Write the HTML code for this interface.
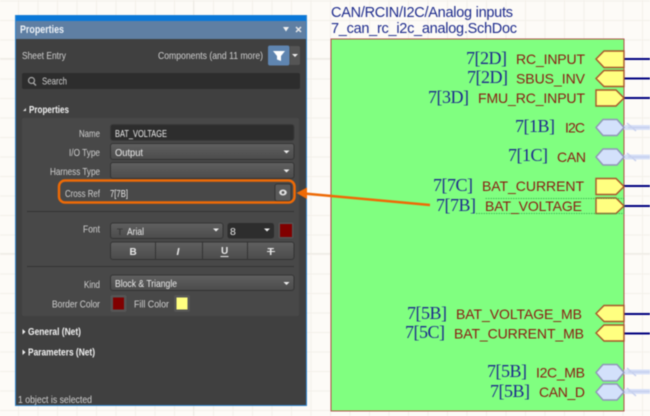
<!DOCTYPE html>
<html><head><meta charset="utf-8"><title>Properties</title>
<style>
html,body{margin:0;padding:0;width:650px;height:416px;overflow:hidden;background:#fdfbf7}
svg{display:block;filter:blur(.45px)}
text{font-family:"Liberation Sans",sans-serif}
.l{font-size:10.500px;fill:#d0d0d0}
.v{font-size:10.500px;fill:#ececec}
.b{font-size:10.500px;fill:#f2f2f2;font-weight:bold}
.p{font-size:14px;fill:#8a1a10}
.x{font-size:18px;fill:#1c2a8c;font-family:"Liberation Serif",serif}
.y{fill:#ffff80;stroke:#a8562a;stroke-width:1.400}
.h{fill:#d3e1fb;stroke:#9095b8;stroke-width:1.400}
.w{stroke:#00007f;stroke-width:2;fill:none}
.g{stroke:#d8e0f8;stroke-width:5;fill:none}
.k{stroke:#c6d0ee;stroke-width:1.500;fill:none}
</style></head><body>
<svg width="650" height="416" viewBox="0 0 650 416" xmlns="http://www.w3.org/2000/svg">
<defs>
<pattern id="grid" x="-1.500" y="0.500" width="19.500" height="19.500" patternUnits="userSpaceOnUse"><path d="M0.500 0V19.500M0 .5H19.500" stroke="#f3f0ea" stroke-width="1" fill="none"/></pattern>
<linearGradient id="c" x1="0" y1="0" x2="0" y2="1"><stop offset="0" stop-color="#606060"/><stop offset="1" stop-color="#4b4b4b"/></linearGradient>
</defs>
<rect width="650" height="416" fill="#fdfbf7"/>
<rect width="650" height="416" fill="url(#grid)"/>
<path d="M193.500 0V416M0 58.500H650M0 253.500H650" stroke="#eeebe5" fill="none"/>

<text x="331" y="17" font-size="14.500" fill="#1c2a8c" textLength="182">CAN/RCIN/I2C/Analog inputs</text>
<text x="331" y="33" font-size="14.500" fill="#1c2a8c" textLength="186">7_can_rc_i2c_analog.SchDoc</text>
<rect x="331" y="39" width="293" height="372" fill="#80ff80" stroke="#b0524a" stroke-width="1"/>

<path class="w" d="M623 59H650M623 78.500H650M623 98H650M623 186H650M623 206H650M623 314H650M623 333.500H650"/>
<path class="g" d="M624 127.500H650M624 157H650M624 372H650M624 391.500H650"/>
<path class="k" d="M627 123L636 131M627 153L636 161M627 368L636 376M627 388L636 396M628 127.500H650M628 157H650M628 372H650M628 391.500H650"/>

<path class="y" d="M624 51H604L596 59L604 67.500H624Z"/>
<path class="y" d="M624 70.500H604L596 78.500L604 86.500H624Z"/>
<path class="y" d="M596 90H616L624 98L616 106H596Z"/>
<path class="h" d="M603 119.500H617L624 127.500L617 135.500H603L596 127.500Z"/>
<path class="h" d="M603 149H617L624 157L617 165H603L596 157Z"/>
<path class="y" d="M596 178.500H616L624 186.500L616 194.500H596Z"/>
<path class="y" d="M596 198H616L624 206L616 213.500H596Z"/>
<path d="M485.500 198.500H624V213.500H476" fill="none" stroke="#2fa84a" stroke-width=".8" stroke-dasharray="1.500 1"/>
<path class="y" d="M624 305.500H604L596 313.500L604 321.500H624Z"/>
<path class="y" d="M624 325H604L596 333L604 341H624Z"/>
<path class="h" d="M603 364.500H617L624 372.500L617 381H603L596 372.500Z"/>
<path class="h" d="M603 384H617L624 392L617 400H603L596 392Z"/>

<text class="p" x="516" y="64" textLength="69">RC_INPUT</text>
<text class="p" x="516" y="83.500" textLength="69">SBUS_INV</text>
<text class="p" x="478" y="103" textLength="107">FMU_RC_INPUT</text>
<text class="p" x="565" y="132.500" textLength="20">I2C</text>
<text class="p" x="557" y="162" textLength="29">CAN</text>
<text class="p" x="482" y="191" textLength="102">BAT_CURRENT</text>
<text class="p" x="485" y="211" textLength="97">BAT_VOLTAGE</text>
<text class="p" x="456" y="319" textLength="126">BAT_VOLTAGE_MB</text>
<text class="p" x="454" y="338.500" textLength="130">BAT_CURRENT_MB</text>
<text class="p" x="536" y="377.500" textLength="49">I2C_MB</text>
<text class="p" x="539" y="397" textLength="46">CAN_D</text>

<text class="x" x="466" y="64" textLength="41">7[2D]</text>
<text class="x" x="467" y="83" textLength="41">7[2D]</text>
<text class="x" x="428" y="103" textLength="41">7[3D]</text>
<text class="x" x="515" y="132" textLength="40">7[1B]</text>
<text class="x" x="508" y="161" textLength="40">7[1C]</text>
<text class="x" x="433" y="191" textLength="40">7[7C]</text>
<text class="x" x="436" y="211" textLength="40">7[7B]</text>
<text class="x" x="407" y="319" textLength="40">7[5B]</text>
<text class="x" x="405" y="338" textLength="40">7[5C]</text>
<text class="x" x="487" y="377" textLength="40">7[5B]</text>
<text class="x" x="490" y="397" textLength="40">7[5B]</text>

<rect x="15.500" y="15.500" width="291" height="390" fill="#404040" stroke="#2f86d0"/>
<rect x="16" y="15.500" width="290" height="6" fill="#0a78d8"/>
<rect x="16" y="21" width="290" height="18" fill="#5f7fa3"/>
<text x="20" y="33" font-size="11" font-weight="bold" fill="#eef3f8" textLength="44" lengthAdjust="spacingAndGlyphs">Properties</text>
<path d="M283 27H289L286 31.500Z" fill="#f0f0f0"/>
<path d="M296 27L301 32M301 27L296 32" stroke="#e8e8e8" stroke-width="1.500"/>

<text class="l" x="22" y="59" textLength="44" lengthAdjust="spacingAndGlyphs">Sheet Entry</text>
<text class="l" x="158" y="59" textLength="105" lengthAdjust="spacingAndGlyphs">Components (and 11 more)</text>
<rect x="268" y="45.500" width="21.500" height="20" rx="2" fill="#5f85b0"/>
<path d="M273 51H285L281 56V61L277 59.500V56Z" fill="#fff"/>
<path d="M290 46H298Q300 46 300 48V63Q300 65 298 65H290Z" fill="#555"/>
<path d="M292 54H298L295 57Z" fill="#eee"/>

<rect x="22" y="73" width="278" height="16" rx="2" fill="#2d2d2d"/>
<circle cx="31.500" cy="80.500" r="3" fill="none" stroke="#aaa" stroke-width="1.200"/>
<path d="M33.500 83L36 85.500" stroke="#aaa" stroke-width="1.300"/>
<text class="l" x="42" y="84.500" textLength="25" lengthAdjust="spacingAndGlyphs">Search</text>

<path d="M23 111H26V108Z" fill="#ddd"/>
<text class="b" x="29" y="113" textLength="40" lengthAdjust="spacingAndGlyphs">Properties</text>

<rect x="22" y="118" width="277" height="198" rx="2" fill="#484848"/>

<text class="l" x="79" y="137" textLength="21" lengthAdjust="spacingAndGlyphs">Name</text>
<rect x="110.500" y="124.500" width="183.500" height="16" rx="2.500" fill="#2d2d2d" stroke="#3a3a3a"/>
<text class="v" x="115" y="137" textLength="52" lengthAdjust="spacingAndGlyphs">BAT_VOLTAGE</text>

<text class="l" x="69" y="156" textLength="31" lengthAdjust="spacingAndGlyphs">I/O Type</text>
<rect x="110.500" y="143.500" width="183.500" height="16" rx="2.500" fill="url(#c)" stroke="#333"/>
<text class="v" x="115" y="156" textLength="28" lengthAdjust="spacingAndGlyphs">Output</text>
<path d="M283.500 150.500H289.500L286.500 153.500Z" fill="#eee"/>

<text class="l" x="50" y="175" textLength="50" lengthAdjust="spacingAndGlyphs">Harness Type</text>
<rect x="110.500" y="162.500" width="183.500" height="16" rx="2.500" fill="url(#c)" stroke="#333"/>
<path d="M283.500 169.500H289.500L286.500 172.500Z" fill="#eee"/>

<text class="l" x="65" y="197" textLength="35" lengthAdjust="spacingAndGlyphs">Cross Ref</text>
<text class="v" x="110" y="197" textLength="18" lengthAdjust="spacingAndGlyphs">7[7B]</text>
<rect x="275" y="184" width="16" height="17" rx="2" fill="#5a5a5a" stroke="#333"/>
<ellipse cx="283" cy="192.500" rx="3.800" ry="3" fill="#e0e0e0"/>
<circle cx="283" cy="192.500" r="1.400" fill="#555"/>

<path d="M27 211.500H294" stroke="#333"/>

<text class="l" x="83" y="232.500" textLength="17" lengthAdjust="spacingAndGlyphs">Font</text>
<rect x="110.500" y="223" width="112.500" height="15.500" rx="2.500" fill="url(#c)" stroke="#333"/>
<text x="117" y="235" font-size="9.500" font-family="Liberation Serif" fill="#3a3a3a" font-weight="bold">T</text>
<text class="v" x="127" y="235" textLength="17" lengthAdjust="spacingAndGlyphs">Arial</text>
<path d="M213 228.500H219L216 231.500Z" fill="#eee"/>
<rect x="227.500" y="223" width="46.500" height="15.500" rx="2.500" fill="#2d2d2d"/>
<text class="v" x="230" y="235">8</text>
<path d="M264 228.500H270L267 231.500Z" fill="#eee"/>
<rect x="278.500" y="222.500" width="15" height="16" rx="2" fill="#555"/>
<rect x="280" y="224" width="12" height="13" fill="#800000"/>

<rect x="110.500" y="242" width="183.500" height="17.500" rx="2.500" fill="url(#c)" stroke="#333"/>
<path d="M155.500 242V259.500M202.500 242V259.500M247.500 242V259.500" stroke="#333"/>
<text x="129.500" y="255" font-size="10" font-weight="bold" fill="#e8e8e8">B</text>
<text x="176.500" y="255" font-size="10.500" font-weight="bold" font-style="italic" fill="#e8e8e8" font-family="Liberation Serif">I</text>
<text x="221" y="254" font-size="10" font-weight="bold" fill="#e8e8e8">U</text>
<path d="M220.500 256.500H228.500" stroke="#e8e8e8"/>
<text x="267.500" y="255" font-size="10.500" font-weight="bold" fill="#e8e8e8" font-family="Liberation Serif">T</text>
<path d="M267 251.500H275" stroke="#e8e8e8"/>

<path d="M27 266.500H294" stroke="#333"/>

<text class="l" x="84" y="288" textLength="16" lengthAdjust="spacingAndGlyphs">Kind</text>
<rect x="110.500" y="275" width="183.500" height="15.500" rx="2.500" fill="url(#c)" stroke="#333"/>
<text class="v" x="115" y="287" textLength="62" lengthAdjust="spacingAndGlyphs">Block &amp; Triangle</text>
<path d="M283.500 282H289.500L286.500 285Z" fill="#eee"/>

<text class="l" x="52" y="307.500" textLength="48" lengthAdjust="spacingAndGlyphs">Border Color</text>
<rect x="110.500" y="295" width="16" height="17" rx="2" fill="#555"/>
<rect x="113" y="297.500" width="11" height="12" fill="#800000"/>
<text class="l" x="134" y="307.500" textLength="35" lengthAdjust="spacingAndGlyphs">Fill Color</text>
<rect x="174" y="295" width="16" height="17" rx="2" fill="#555"/>
<rect x="176.500" y="297.500" width="11" height="12" fill="#ffff80"/>

<path d="M22.500 329V334.500L25.500 331.700Z" fill="#eee"/>
<text class="b" x="28" y="335" textLength="53" lengthAdjust="spacingAndGlyphs">General (Net)</text>
<path d="M22.500 349.500V355L25.500 352.200Z" fill="#eee"/>
<text class="b" x="28" y="355.500" textLength="67" lengthAdjust="spacingAndGlyphs">Parameters (Net)</text>

<text class="l" x="18" y="403" textLength="74" lengthAdjust="spacingAndGlyphs">1 object is selected</text>

<rect x="59" y="180.500" width="235.500" height="22" rx="6" fill="none" stroke="#ee6a06" stroke-width="2.500"/>
<path d="M304 193.500L430 205" stroke="#ee6a06" stroke-width="2.500" fill="none"/>
<path d="M296.500 193L307 187.500V199Z" fill="#ee6a06"/>
</svg>
</body></html>
